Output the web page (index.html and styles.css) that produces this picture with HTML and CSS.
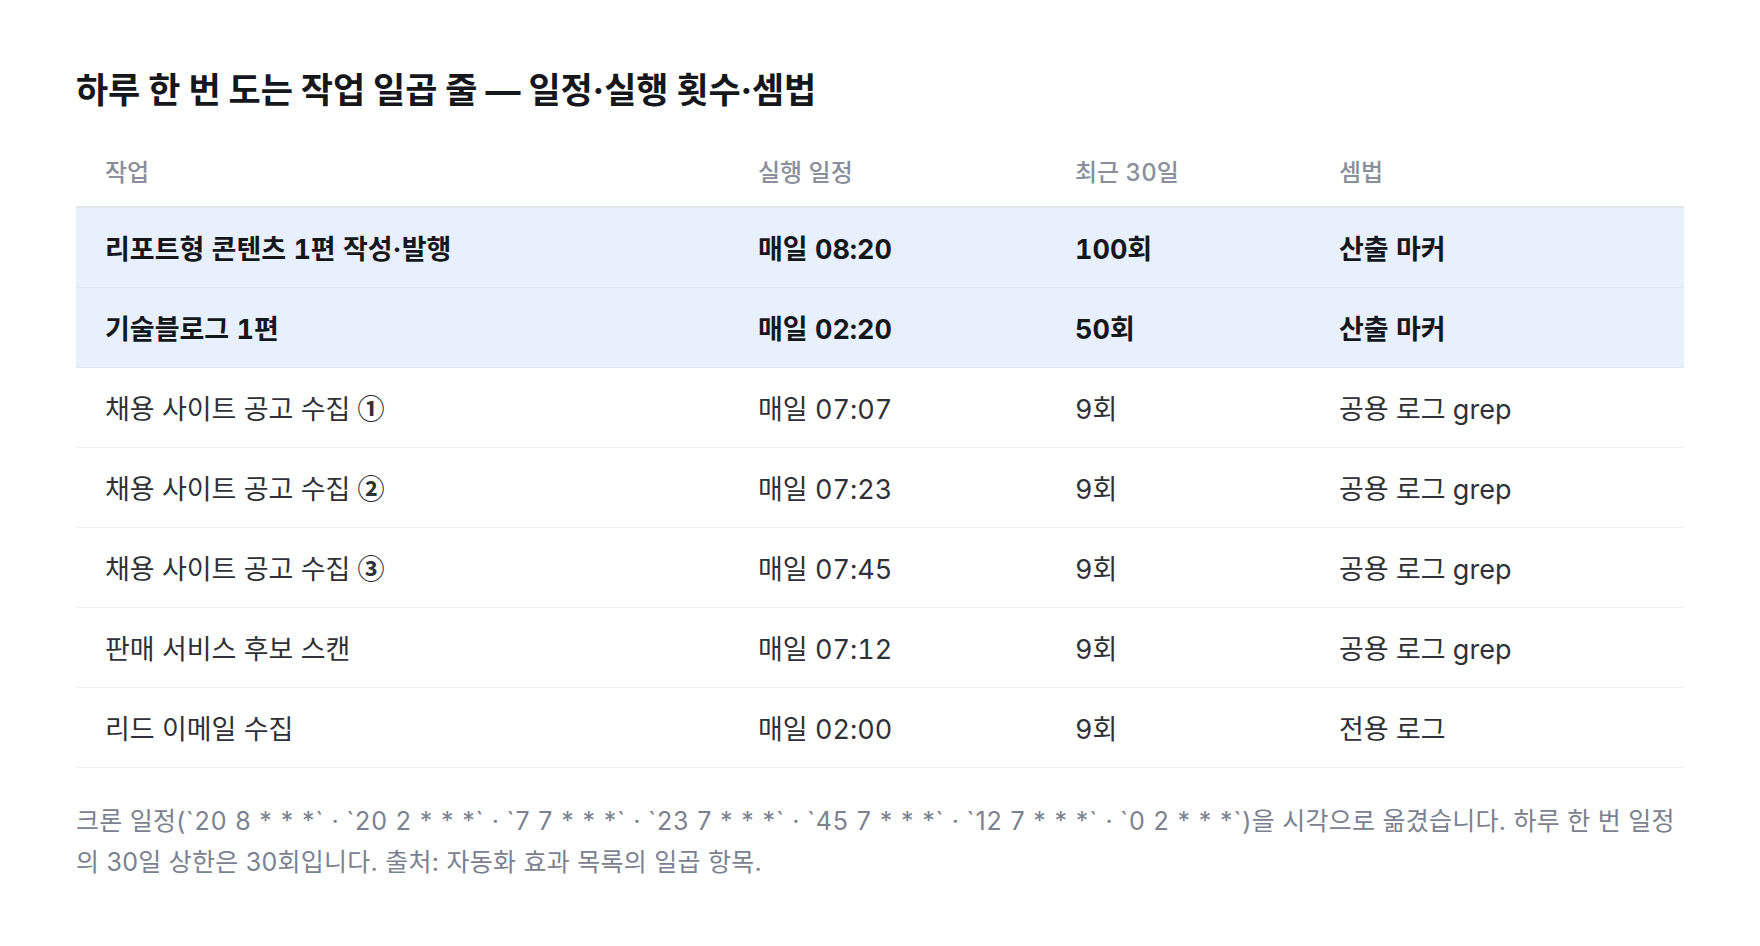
FILE: index.html
```html
<!DOCTYPE html>
<html lang="ko">
<head>
<meta charset="utf-8">
<title>하루 한 번 도는 작업 일곱 줄</title>
<link rel="stylesheet" href="styles.css">
</head>
<body>
<main class="page">
  <h1 class="title">하루 한 번 도는 작업 일곱 줄 — 일정·실행 횟수·셈법</h1>
  <table class="jobs">
    <colgroup>
      <col class="c-job"><col class="c-when"><col class="c-count"><col class="c-calc">
    </colgroup>
    <thead>
      <tr><th>작업</th><th>실행 일정</th><th>최근 30일</th><th>셈법</th></tr>
    </thead>
    <tbody>
      <tr class="hl"><td>리포트형 콘텐츠 1편 작성·발행</td><td>매일 08:20</td><td>100회</td><td>산출 마커</td></tr>
      <tr class="hl"><td>기술블로그 1편</td><td>매일 02:20</td><td>50회</td><td>산출 마커</td></tr>
      <tr><td>채용 사이트 공고 수집 <span class="circ">①</span></td><td>매일 07:07</td><td>9회</td><td>공용 로그 grep</td></tr>
      <tr><td>채용 사이트 공고 수집 <span class="circ">②</span></td><td>매일 07:23</td><td>9회</td><td>공용 로그 grep</td></tr>
      <tr><td>채용 사이트 공고 수집 <span class="circ">③</span></td><td>매일 07:45</td><td>9회</td><td>공용 로그 grep</td></tr>
      <tr><td>판매 서비스 후보 스캔</td><td>매일 07:12</td><td>9회</td><td>공용 로그 grep</td></tr>
      <tr><td>리드 이메일 수집</td><td>매일 02:00</td><td>9회</td><td>전용 로그</td></tr>
    </tbody>
  </table>
  <p class="note">크론 일정(<span class="cron">`20 8 * * *`</span> · <span class="cron">`20 2 * * *`</span> · <span class="cron">`7 7 * * *`</span> · <span class="cron">`23 7 * * *`</span> · <span class="cron">`45 7 * * *`</span> · <span class="cron">`12 7 * * *`</span> · <span class="cron">`0 2 * * *`</span>)을 시각으로 옮겼습니다. 하루 한 번 일정의 30일 상한은 30회입니다. 출처: 자동화 효과 목록의 일곱 항목.</p>
</main>
</body>
</html>
```

FILE: styles.css
```css
html, body {
  margin: 0;
  padding: 0;
  background: #ffffff;
}

body {
  font-family: Inter, "Noto Sans CJK KR", sans-serif;
  color: #1a1c20;
}

.page {
  padding: 65px 76px 0 76px;
}

.title {
  margin: 0;
  font-size: 35px;
  line-height: 50px;
  font-weight: 700;
  color: #15171b;
  letter-spacing: -0.15px;
}

.jobs {
  width: 100%;
  margin-top: 19px;
  border-collapse: collapse;
  table-layout: fixed;
  font-variant-numeric: tabular-nums;
}

.c-job { width: 653px; }
.c-when { width: 317px; }
.c-count { width: 264px; }

.jobs th {
  height: 72px;
  padding: 0 0 0 29px;
  text-align: left;
  font-size: 24px;
  font-weight: 500;
  color: #8a8f9b;
  border-bottom: 2px solid #e1e4ea;
  vertical-align: middle;
}

.jobs td {
  height: 79px;
  padding: 0 0 0 29px;
  font-size: 27px;
  font-weight: 400;
  color: #2f3136;
  border-bottom: 1px solid #edf0f4;
  vertical-align: middle;
  white-space: nowrap;
}

.jobs tr.hl td {
  background: #e8effd;
  font-weight: 700;
  color: #15171b;
  border-bottom-color: #e2e8f4;
}

.circ {
  font-family: "Noto Sans CJK KR", sans-serif;
  font-weight: 700;
}

.note {
  margin: 33px 0 0 0;
  font-size: 25px;
  line-height: 41px;
  letter-spacing: 0.25px;
  color: #7c8190;
}

.cron {
  letter-spacing: 0.85px;
}
```
